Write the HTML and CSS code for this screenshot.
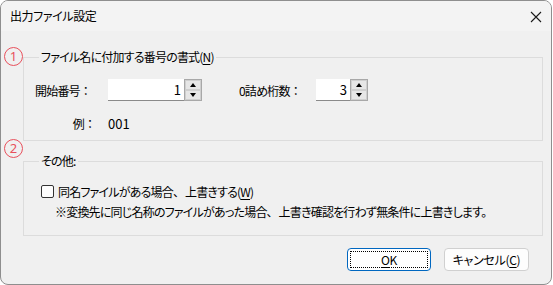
FILE: index.html
```html
<!DOCTYPE html>
<html lang="ja">
<head>
<meta charset="utf-8">
<title>出力ファイル設定</title>
<link rel="stylesheet" href="styles.css">
</head>
<body>
<div class="window">
  <div class="titlebar">
    <span class="title">出力ファイル設定</span>
    <svg class="close" width="12" height="12" viewBox="0 0 12 12"><path d="M1 1 L11 11 M11 1 L1 11" stroke="#1a1a1a" stroke-width="1.1" fill="none"/></svg>
  </div>
  <div class="content">
    <div class="group-row">
      <span class="badge">1</span>
      <fieldset class="group g1">
        <legend>ファイル名に付加する番号の書式(<u>N</u>)</legend>
        <div class="num-row">
          <span class="label">開始番号<span class="fw">：</span></span>
          <div class="spin w76">
            <span class="value">1</span>
            <div class="spin-btns"><span class="sb"><i class="up"></i></span><span class="sb"><i class="down"></i></span></div>
          </div>
          <span class="label2">0詰め桁数<span class="fw">：</span></span>
          <div class="spin w34">
            <span class="value">3</span>
            <div class="spin-btns"><span class="sb"><i class="up"></i></span><span class="sb"><i class="down"></i></span></div>
          </div>
        </div>
        <div class="ex-row">
          <span class="label">例<span class="fw">：</span></span>
          <span class="ex">001</span>
        </div>
      </fieldset>
    </div>
    <div class="group-row">
      <span class="badge">2</span>
      <fieldset class="group g2">
        <legend>その他:</legend>
        <label class="check"><span class="box"></span>同名ファイルがある場合<span class="fw">、</span>上書きする(<u>W</u>)</label>
        <div class="note">※変換先に同じ名称のファイルがあった場合<span class="fw">、</span>上書き確認を行わず無条件に上書きします。</div>
      </fieldset>
    </div>
    <div class="buttons">
      <button class="btn ok"><span class="focus"><u>O</u>K</span></button>
      <button class="btn">キャンセル(<u>C</u>)</button>
    </div>
  </div>
</div>
</body>
</html>
```
FILE: styles.css
```css
* { box-sizing: border-box; }
html, body { margin: 0; padding: 0; background: #ffffff; }
body {
  font-family: "Noto Sans CJK JP", "Noto Sans", sans-serif;
  font-size: 12px;
  color: #000;
  font-feature-settings: "palt";
  letter-spacing: -0.8px;
}
.window {
  width: 552px;
  height: 285px;
  border: 1px solid #8e8e8e;
  border-radius: 8px;
  background: #f0f0f0;
  overflow: hidden;
}
.titlebar {
  height: 30px;
  background: #f3f3f3;
  display: flex;
  align-items: center;
  justify-content: space-between;
  padding: 0 9px 0 9px;
}
.title { line-height: 16px; letter-spacing: -0.4px; }
.close { margin-top: 1px; }
.content {
  padding: 18px 0 0 2px;
}
.group-row {
  display: flex;
  align-items: flex-start;
}
.badge {
  width: 19px;
  height: 19px;
  border: 1.3px solid #e8505c;
  border-radius: 50%;
  color: #e8505c;
  font-family: "Noto Sans", sans-serif;
  font-size: 13px;
  letter-spacing: 0;
  line-height: 16px;
  text-align: center;
  margin-top: -2px;
  margin-left: 1px;
  flex: none;
}
.group {
  margin: 0;
  border: 1px solid #dcdcdc;
  width: 520px;
  padding: 0 0 0 11px;
}
.group legend {
  padding: 0 2px;
  margin-left: 4px;
  line-height: 16px;
}
.fw { font-feature-settings: normal; letter-spacing: 0; }
.g1 { height: 92px; }
.g2 { height: 83px; margin-top: 12px; }
.num-row {
  display: flex;
  align-items: center;
  margin-top: 14px;
  height: 22px;
}
.label {
  width: 61px;
  text-align: right;
  margin-right: 12px;
  flex: none;
}
.num-row .label { text-align: left; }
.spin {
  display: flex;
  height: 22px;
}
.w76 .value { width: 76px; }
.w34 .value { width: 34px; }
.value {
  background: #fff;
  border-bottom: 1px solid #8a8a8a;
  text-align: right;
  padding-right: 3px;
  line-height: 21px;
  font-size: 13px;
  letter-spacing: 0;
}
.spin-btns {
  width: 18px;
  border: 1px solid #a8a8a8;
  display: flex;
  flex-direction: column;
}
.sb {
  flex: 1;
  border: 1px solid #cfcfcf;
  background: #e6e6e6;
  display: flex;
  align-items: center;
  justify-content: center;
}
.sb i {
  width: 0; height: 0;
  border-left: 3px solid transparent;
  border-right: 3px solid transparent;
}
.sb i.up { border-bottom: 4px solid #000; }
.sb i.down { border-top: 4px solid #000; }
.label2 {
  margin-left: 37px;
  width: 77px;
}
.ex-row {
  display: flex;
  align-items: center;
  margin-top: 12px;
  height: 20px;
  padding-left: 26px;
}
.ex-row .label { width: 35px; }
.ex { font-size: 13px; letter-spacing: 0; }
.check {
  display: flex;
  align-items: center;
  margin-top: 14px;
  margin-left: 6px;
  height: 16px;
}
.box {
  width: 13px;
  height: 13px;
  border: 1px solid #333;
  border-radius: 2px;
  background: #fdfdfd;
  margin-right: 4px;
}
.note {
  margin-left: 20px;
  margin-top: 5px;
  line-height: 16px;
}
.buttons {
  display: flex;
  justify-content: flex-end;
  gap: 13px;
  margin-top: 12px;
  padding-right: 22px;
}
.btn {
  font: inherit;
  letter-spacing: -0.3px;
  height: 23px;
  width: 85px;
  background: #fdfdfd;
  border: 1px solid #d0d0d0;
  border-radius: 4px;
  color: #000;
  padding: 0;
  display: flex;
  align-items: center;
  justify-content: center;
}
.btn.ok {
  width: 84px;
  border: 1px solid #0067c0;
  background: #fff;
  padding: 2px;
}
.focus {
  width: 100%;
  height: 100%;
  border: 1px dotted #000;
  display: flex;
  align-items: center;
  justify-content: center;
}
u { text-underline-offset: 2px; }
```
